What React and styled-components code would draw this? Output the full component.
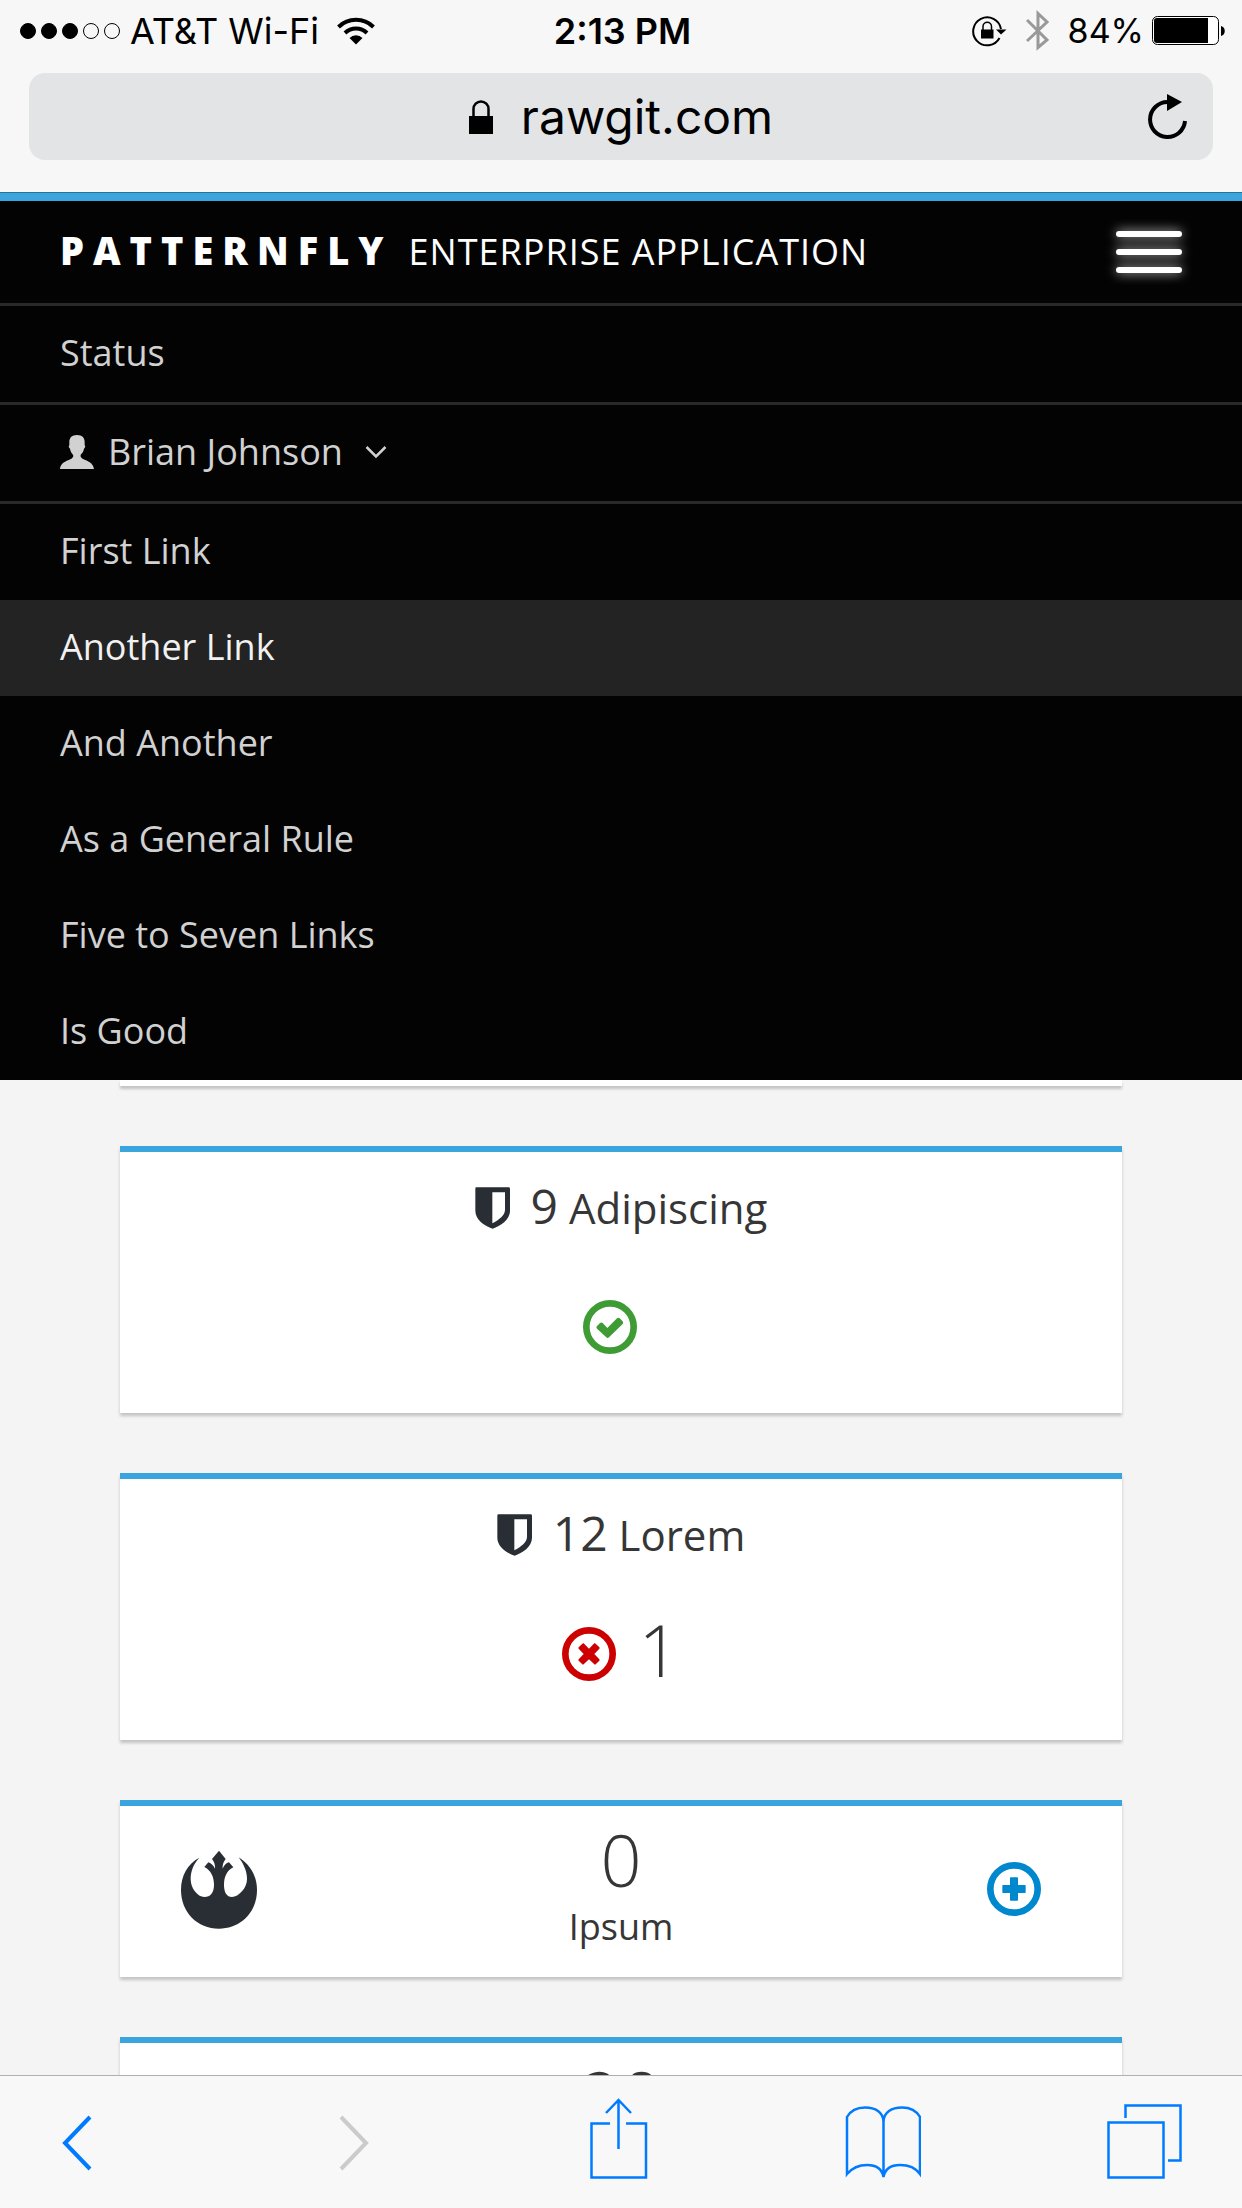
import React from 'react';
import styled, { createGlobalStyle } from 'styled-components';

const GlobalStyle = createGlobalStyle`
  *, *::before, *::after { box-sizing: border-box; }
  body { margin: 0; background: #f4f4f4; }
  button { font: inherit; color: inherit; border: 0; padding: 0; background: none; cursor: pointer; }
  h1, h2, p, ul { margin: 0; padding: 0; font-weight: 400; }
  ul { list-style: none; }
  a { color: inherit; text-decoration: none; }
  svg { display: block; flex: none; }
`;

const sans = '"Open Sans", "Noto Sans", sans-serif';
const system = 'Inter, "Liberation Sans", sans-serif';

const Phone = styled.div`
  display: flex;
  flex-direction: column;
  height: 100vh;
  overflow: hidden;
  font-family: ${sans};
  font-size: 36px;
  line-height: 48px;
  color: #363636;
`;

/* Browser chrome */
const Chrome = styled.header`
  flex: none;
  padding-bottom: 32px;
  background: #f7f7f7;
  border-bottom: 1px solid #2b7298;
  font-family: ${system};
  color: #000;
`;

const StatusBar = styled.div`
  display: grid;
  grid-template-columns: 1fr auto 1fr;
  align-items: center;
  height: 61px;
  margin-bottom: 12px;
  padding: 0 17px 0 20px;
  font-size: 36px;
`;

const StatusGroup = styled.div`
  display: flex;
  align-items: center;
  gap: ${(p) => p.$gap}px;
  justify-content: ${(p) => (p.$end ? 'flex-end' : 'flex-start')};
`;

const Signal = styled.div`
  display: flex;
  gap: 5px;
`;

const Dot = styled.span`
  width: 16px;
  height: 16px;
  border-radius: 50%;
  border: 1px solid #000;
  background: ${(p) => (p.$on ? '#000' : 'transparent')};
`;

const Carrier = styled.span`
  margin-right: 8px;
`;

const Clock = styled.time`
  font-weight: 600;
`;

const Charge = styled.span`
  font-size: 34px;
`;

const AddressBar = styled.div`
  display: grid;
  grid-template-columns: 1fr auto 1fr;
  align-items: center;
  height: 87px;
  margin: 0 29px;
  padding: 0 26px;
  border-radius: 16px;
  background: #e3e4e6;
`;

const Address = styled.button`
  grid-column: 2;
  display: flex;
  align-items: center;
  gap: 28px;
  font-size: 48px;
`;

const Reload = styled.button`
  justify-self: end;
`;

/* Application */
const Viewport = styled.div`
  flex: 1;
  min-height: 0;
  overflow: hidden;
  background: #f4f4f4;
`;

const Navbar = styled.nav`
  border-top: 8px solid #39a5dc;
  background: #030303;
  color: #d1d1d1;
`;

const NavHeader = styled.div`
  display: flex;
  align-items: center;
  justify-content: space-between;
  height: 102px;
  padding: 0 60px;
  color: #fff;
`;

const Brand = styled.h1`
  display: flex;
  align-items: baseline;
  gap: 16px;
  padding-bottom: 2px;
  font-size: 36px;
  letter-spacing: 1px;
`;

const BrandName = styled.span`
  font-size: 38px;
  font-weight: 800;
  letter-spacing: 9px;
`;

const MenuToggle = styled.button`
  display: flex;
  flex-direction: column;
  gap: 12px;
`;

const MenuBar = styled.span`
  width: 66px;
  height: 6px;
  border-radius: 3px;
  background: #fff;
  box-shadow: 0 0 12px rgba(255, 255, 255, 0.8);
`;

const NavItem = styled.li`
  border-top: 3px solid #292929;
`;

const NavLink = styled.a`
  display: flex;
  align-items: center;
  height: 96px;
  padding: 0 60px 2px;
  background: ${(p) => (p.$active ? '#232323' : 'transparent')};
  color: ${(p) => (p.$active ? '#f1f1f1' : 'inherit')};
`;

const UserToggle = styled.button`
  display: flex;
  align-items: center;
  width: 100%;
  height: 96px;
  padding: 0 60px 2px;
`;

const UserName = styled.span`
  margin: 0 22px 0 14px;
`;

const Submenu = styled.ul`
  border-top: 3px solid #292929;
`;

const Cards = styled.main`
  display: flex;
  flex-direction: column;
  gap: 60px;
  padding: 0 120px;
`;

const Card = styled.section`
  border-top: 6px solid #39a5dc;
  background: #fff;
  box-shadow: 0 3px 3px rgba(3, 3, 3, 0.2);
`;

const CardEnd = styled(Card)`
  height: 6px;
  border-top: 0;
`;

const StatusCard = styled(Card)`
  padding: 29px 60px 55px;
`;

const CardTitle = styled.h2`
  display: flex;
  align-items: center;
  justify-content: center;
  gap: 21px;
  height: 54px;
  font-size: 42px;
  line-height: 54px;
`;

const Count = styled.span`
  font-size: 48px;
  line-height: 48px;
`;

const Notices = styled.div`
  display: flex;
  align-items: flex-end;
  justify-content: center;
  gap: 22px;
  min-height: 72px;
  margin-top: 51px;

  svg { margin-bottom: 4px; }
`;

const BigNumber = styled.span`
  display: block;
  font-size: 72px;
  font-weight: 300;
  line-height: 72px;
`;

const MiniCard = styled(Card)`
  display: grid;
  grid-template-columns: 1fr auto 1fr;
  align-items: center;
  padding: 17px 60px 22px;
`;

const MiniBody = styled.h2`
  display: flex;
  flex-direction: column;
  align-items: center;
  gap: 8px;
  padding-bottom: 4px;
  font-size: 36px;
`;

const AddButton = styled.button`
  justify-self: end;
  padding-right: 21px;
`;

/* Bottom toolbar */
const Toolbar = styled.footer`
  flex: none;
  display: flex;
  align-items: center;
  justify-content: space-between;
  height: 133px;
  padding: 0 60px 0 62px;
  border-top: 1px solid #b0b0b0;
  background: #f8f8f8;
  color: #007aff;

  button:disabled { color: #cbcbcb; }
`;

const Wifi = () => (
  <svg width="38" height="28" viewBox="0 0 38 28" fill="none" stroke="#000" strokeWidth="4">
    <path d="M1.500 10A25 25 0 0 1 36.500 10" />
    <path d="M8 16A16 16 0 0 1 30 16" />
    <path d="M12.500 21A9 9 0 0 1 25.500 21L19 27.500Z" fill="#000" stroke="none" />
  </svg>
);

const RotationLock = () => (
  <svg width="36" height="32" viewBox="0 0 36 32">
    <path d="M27.500 23A14 14 0 1 1 29 14" fill="none" stroke="#000" strokeWidth="2" />
    <path d="M24 14.500H34.500L29 19.500Z" />
    <rect x="9" y="14.500" width="12.500" height="9" />
    <path d="M11 15V11.500A4 4 0 0 1 19.500 11.500V15" fill="none" stroke="#000" strokeWidth="1.500" />
  </svg>
);

const Bluetooth = () => (
  <svg width="24" height="42" viewBox="0 0 24 42" fill="none" stroke="#999" strokeWidth="3">
    <path d="M1 10L21 30L12 37.500V3.500L21 12L1 31" />
  </svg>
);

const Battery = () => (
  <svg width="73" height="30" viewBox="0 0 73 30">
    <rect x="0.500" y="0.500" width="66" height="28" rx="5" fill="#fff" stroke="#000" />
    <path d="M5 2H56V27H5A3 3 0 0 1 2 24V5A3 3 0 0 1 5 2Z" />
    <path d="M69 10C74 11 74 19 69 20Z" />
  </svg>
);

const Lock = () => (
  <svg width="24" height="34" viewBox="0 0 24 34">
    <rect y="16" width="24" height="18" />
    <path d="M4.500 17V9A7.500 7.500 0 0 1 19.500 9V17" fill="none" stroke="#000" strokeWidth="2.500" />
  </svg>
);

const ReloadIcon = () => (
  <svg width="39" height="46" viewBox="0 0 39 46">
    <path d="M37 27A17.500 17.500 0 1 1 19.500 8" fill="none" stroke="#000" strokeWidth="4" />
    <path d="M19 0L34 8L19 17Z" />
  </svg>
);

const User = () => (
  <svg width="34" height="34" viewBox="0 0 102 102" fill="currentColor">
    <path d="M51 0C35 0 27 8 28 25V31C25 33 26 38 30 41C31 49 35 54 39 59C42 66 36 71 26 75C10 81 1 89 0 102H102C100 89 91 81 76 75C65 71 60 66 62 59C67 54 71 49 72 41C76 38 77 33 74 31V25C75 8 67 0 51 0Z" />
  </svg>
);

const Chevron = () => (
  <svg width="22" height="14" viewBox="0 0 22 14" fill="none" stroke="currentColor" strokeWidth="2.500">
    <path d="M1.500 2L11 11.500L20.500 2" />
  </svg>
);

const Shield = () => (
  <svg width="35" height="42" viewBox="0 0 105 126" fill="#292e34">
    <path fillRule="evenodd" d="M4 1H101Q105 1 105 5V71C105 98 76 117 53 125C29 117 1 98 1 71V5Q1 1 4 1ZM52 16V109C73 97 90 85 90 68V16Z" />
  </svg>
);

const Ring = ({ color, children }) => (
  <svg width="54" height="54" viewBox="0 0 162 162" fill={color}>
    <circle cx="81" cy="81" r="71" fill="none" stroke={color} strokeWidth="20" />
    {children}
  </svg>
);

const Ok = () => (
  <Ring color="#3f9c35">
    <path d="M42 78L51 69Q55 66 59 69L73 84L102 55Q106 52 110 55L119 64Q122 68 119 72L78 112Q74 116 70 112L42 86Q38 82 42 78Z" />
  </Ring>
);

const ErrorIcon = () => (
  <Ring color="#cc0000">
    <path d="M65 49L81 65L97 49Q99 48 101 50L112 61Q114 63 112 65L97 81L112 97Q114 99 112 101L101 112Q99 114 97 112L81 97L65 112Q63 114 61 112L50 101Q48 99 50 97L65 81L50 65Q48 63 50 61L61 50Q63 48 65 49Z" />
  </Ring>
);

const Add = () => (
  <Ring color="#0088ce">
    <path d="M69 48Q69 46 71 46H91Q93 46 93 48V69H114Q116 69 116 71V91Q116 93 114 93H93V114Q93 116 91 116H71Q69 116 69 114V93H48Q46 93 46 91V71Q46 69 48 69H69Z" />
  </Ring>
);

const Rebel = () => (
  <svg width="78" height="79" viewBox="240 208 234 237" fill="#292e34">
    <path d="M298 231C262 250 243 285 243 328C243 395 292 444 357 444C422 444 471 395 471 328C471 285 450 252 416 230C434 254 441 275 441 296C441 322 416 349 396 349C380 349 372 334 372 312C372 288 382 268 400 260L387 245C379 247 371 255 368 264C367 254 370 244 377 235L357 210L336 235C343 243 346 254 345 264C341 256 334 248 325 245L313 259C332 268 342 288 342 312C342 335 332 349 313 349C292 349 272 322 272 296C272 272 280 250 298 231Z" />
  </svg>
);

const ToolIcon = ({ children, width = 2.5 }) => (
  <svg width="76" height="88" viewBox="0 0 76 88" fill="none" stroke="currentColor" strokeWidth={width}>
    {children}
  </svg>
);

const links = ['First Link', 'Another Link', 'And Another', 'As a General Rule', 'Five to Seven Links', 'Is Good'];

export default function App() {
  return (
    <Phone>
      <GlobalStyle />
      <Chrome>
        <StatusBar>
          <StatusGroup $gap={10}>
            <Signal>
              {[1, 1, 1, 0, 0].map((on, i) => <Dot key={i} $on={on} />)}
            </Signal>
            <Carrier>AT&amp;T Wi-Fi</Carrier>
            <Wifi />
          </StatusGroup>
          <Clock>2:13 PM</Clock>
          <StatusGroup $gap={18} $end>
            <RotationLock />
            <Bluetooth />
            <StatusGroup $gap={8}>
              <Charge>84%</Charge>
              <Battery />
            </StatusGroup>
          </StatusGroup>
        </StatusBar>
        <AddressBar>
          <Address>
            <Lock />
            rawgit.com
          </Address>
          <Reload aria-label="Reload"><ReloadIcon /></Reload>
        </AddressBar>
      </Chrome>

      <Viewport>
        <Navbar>
          <NavHeader>
            <Brand>
              <BrandName>PATTERNFLY</BrandName>
              <span>ENTERPRISE APPLICATION</span>
            </Brand>
            <MenuToggle aria-label="Toggle navigation">
              <MenuBar />
              <MenuBar />
              <MenuBar />
            </MenuToggle>
          </NavHeader>
          <ul>
            <NavItem><NavLink href="#status">Status</NavLink></NavItem>
            <NavItem>
              <UserToggle aria-expanded="true">
                <User />
                <UserName>Brian Johnson</UserName>
                <Chevron />
              </UserToggle>
              <Submenu>
                {links.map((label) => (
                  <li key={label}>
                    <NavLink href="#" $active={label === 'Another Link'}>{label}</NavLink>
                  </li>
                ))}
              </Submenu>
            </NavItem>
          </ul>
        </Navbar>

        <Cards>
          <CardEnd />
          <StatusCard>
            <CardTitle><Shield /><span><Count>9</Count> Adipiscing</span></CardTitle>
            <Notices><Ok /><span /></Notices>
          </StatusCard>
          <StatusCard>
            <CardTitle><Shield /><span><Count>12</Count> Lorem</span></CardTitle>
            <Notices><ErrorIcon /><BigNumber>1</BigNumber></Notices>
          </StatusCard>
          <MiniCard>
            <Rebel />
            <MiniBody><BigNumber>0</BigNumber>Ipsum</MiniBody>
            <AddButton aria-label="Add"><Add /></AddButton>
          </MiniCard>
          <MiniCard>
            <span />
            <MiniBody><BigNumber>20</BigNumber></MiniBody>
          </MiniCard>
        </Cards>
      </Viewport>

      <Toolbar>
        <button aria-label="Back">
          <ToolIcon width={4}><path d="M28 19L3 45L28 71" /></ToolIcon>
        </button>
        <button aria-label="Forward" disabled>
          <ToolIcon width={4}><path d="M18 19L43 45L18 71" /></ToolIcon>
        </button>
        <button aria-label="Share">
          <ToolIcon>
            <path d="M26 25.500H7.500V79.500H62V25.500H42M34.500 51V3M22 15L34.500 2L47 15" />
          </ToolIcon>
        </button>
        <button aria-label="Bookmarks">
          <ToolIcon>
            <path d="M38.500 79V24C38.500 14 30 9.500 20 9.500C12 9.500 6 12 2 19V76C8 69 16 67 22 67C31 67 37 71 38.500 79C40 71 46 67 55 67C62 67 70 69 75 76V19C71 12 65 9.500 57 9.500C47 9.500 38.500 14 38.500 24" />
          </ToolIcon>
        </button>
        <button aria-label="Tabs">
          <ToolIcon>
            <path d="M2.500 24.500H57.500V79.500H2.500ZM19.500 20V7.500H74.500V62.500H62" />
          </ToolIcon>
        </button>
      </Toolbar>
    </Phone>
  );
}
